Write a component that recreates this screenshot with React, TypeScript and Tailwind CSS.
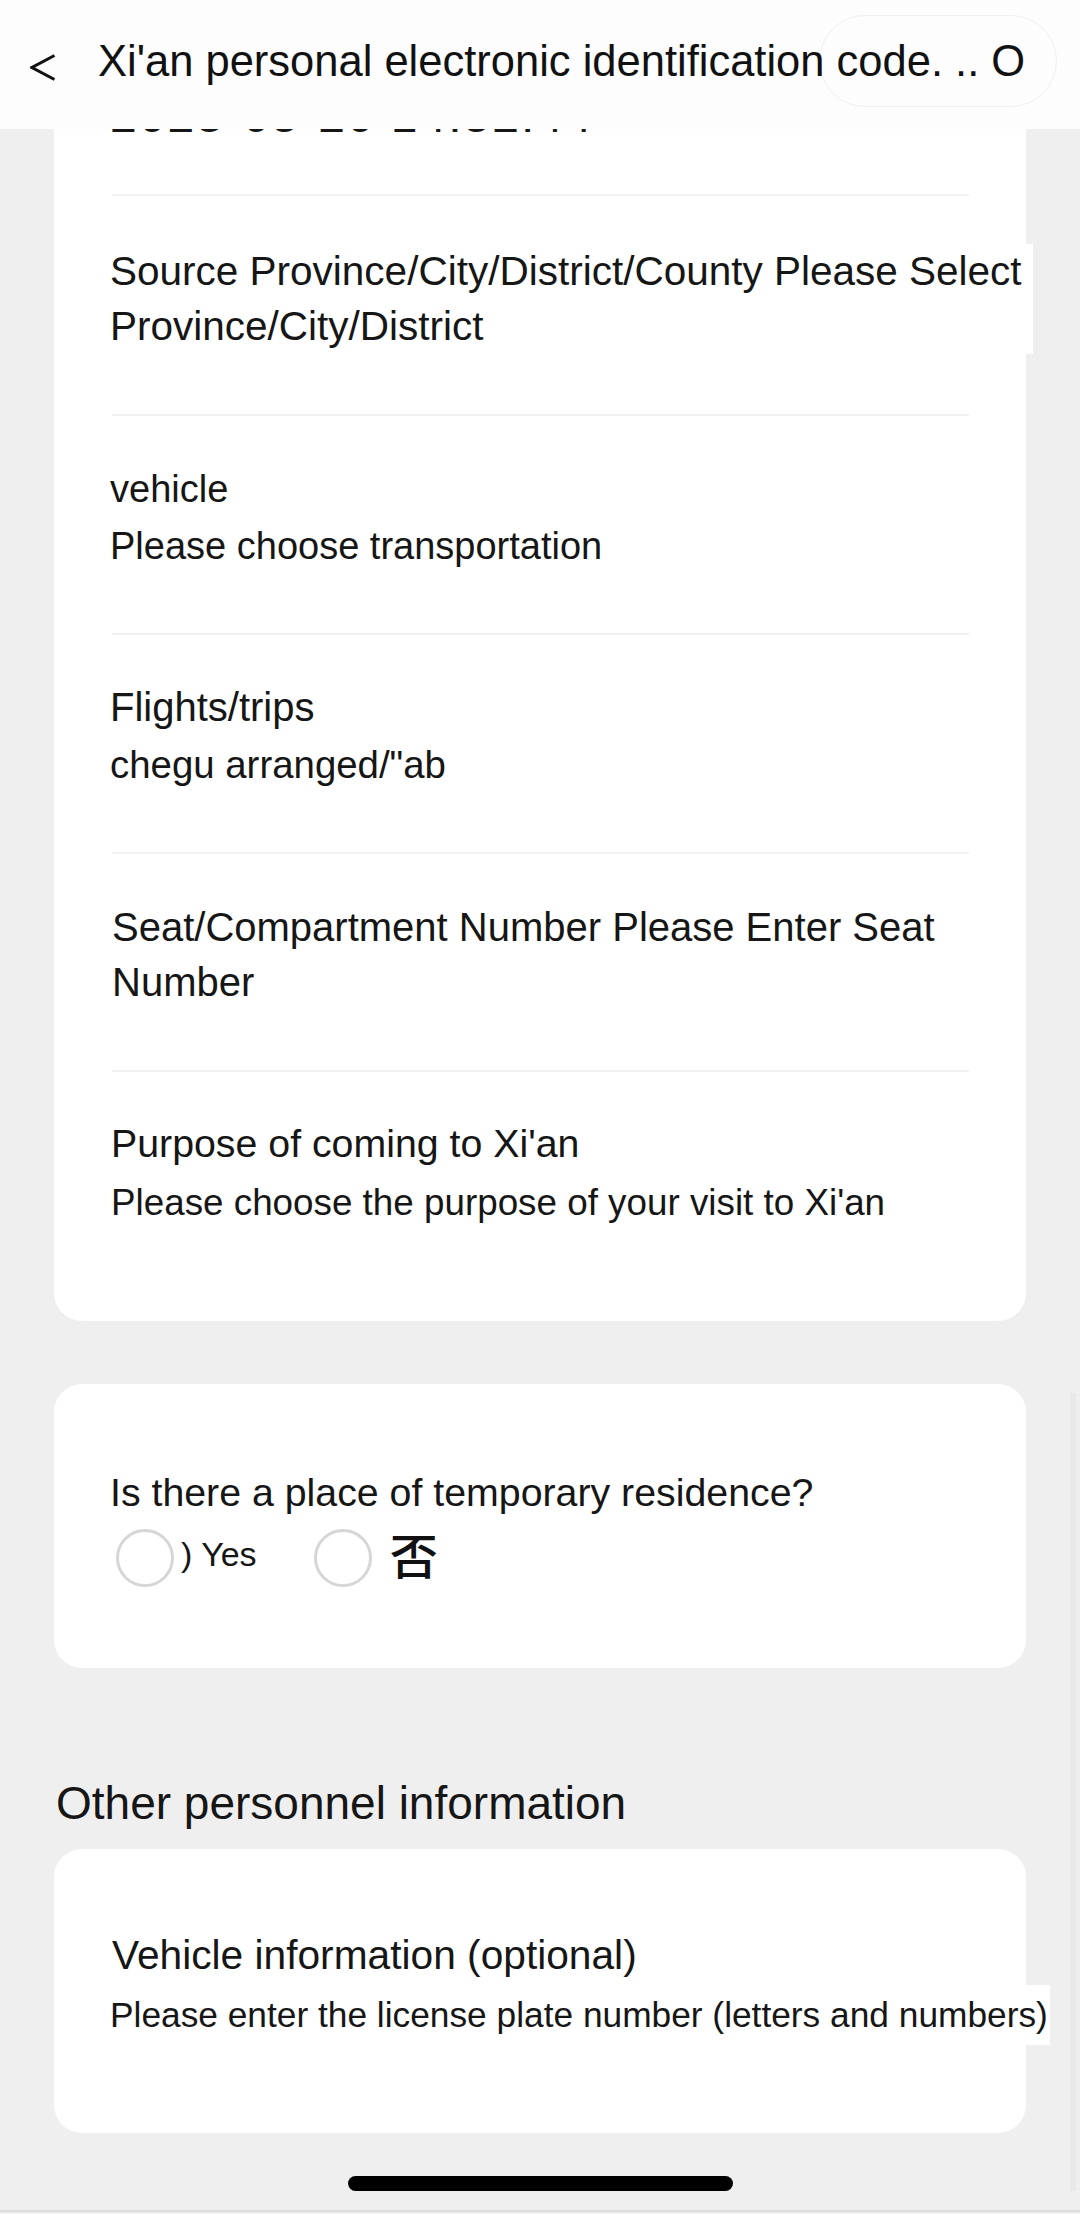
import React from "react";

function Divider() {
  return <div className="ml-[58px] mr-[57px] h-[2px] bg-[#f1f1f1]" />;
}

export default function App() {
  return (
    <div className="relative min-h-[2214px] w-[1080px] overflow-hidden bg-[#efefef] font-['Liberation_Sans','Noto_Sans_CJK_SC',sans-serif] text-[#161616]">
      {/* Top navigation bar (overlays scrolled content) */}
      <div className="absolute left-0 top-0 z-10 h-[129px] w-full bg-[#fdfdfd]">
        <div className="absolute left-[819px] top-[15px] h-[92px] w-[238px] rounded-full border border-[#efefef]" />
        <div className="relative flex items-start">
          <svg className="ml-[30px] mt-[54px]" width="26" height="27" viewBox="0 0 26 27">
            <polyline points="24.5,1.5 2,13.5 24.5,25.5" fill="none" stroke="#111" strokeWidth="3" strokeLinejoin="miter" />
          </svg>
          <span className="ml-[42px] mt-[31px] whitespace-nowrap text-[43.5px] leading-[60px] text-[#111]">
            Xi'an personal electronic identification code. .. O
          </span>
        </div>
      </div>

      {/* Scroll indicator */}
      <div className="absolute right-[4px] top-[1393px] h-[798px] w-[6px] bg-[#e9e9e9]" />
      <div className="absolute bottom-[2px] left-0 h-[2px] w-full bg-[#dedede]" />

      <div className="flex flex-col px-[54px] pt-[40px]">
        {/* Card 1 */}
        <div className="rounded-[28px] bg-white">
          <div className="pl-[56px] pt-[46px] pb-[48px]">
            <div className="h-[60px] whitespace-nowrap text-[48px] leading-[60px] tracking-[2px]">2023-05-20 14:52:44</div>
          </div>
          <Divider />
          <div className="pl-[56px] pt-[48px] pb-[60px]">
            <div className="w-[923px] whitespace-nowrap bg-white text-[40.5px] leading-[55px]">
              Source Province/City/District/County Please Select
              <br />
              Province/City/District
            </div>
          </div>
          <Divider />
          <div className="whitespace-nowrap pl-[56px] pt-[45px] pb-[58px] text-[38px] leading-[57px]">
            <div>vehicle</div>
            <div>Please choose transportation</div>
          </div>
          <Divider />
          <div className="whitespace-nowrap pl-[56px] pt-[44px] pb-[59px] leading-[57px]">
            <div className="text-[40px]">Flights/trips</div>
            <div className="text-[38.4px]">{'chegu arranged/"ab'}</div>
          </div>
          <Divider />
          <div className="whitespace-nowrap pl-[58px] pt-[46px] pb-[60px] text-[40px] leading-[55px]">
            <div>Seat/Compartment Number Please Enter Seat</div>
            <div>Number</div>
          </div>
          <Divider />
          <div className="whitespace-nowrap pl-[57px] pt-[41px] pb-[88px] leading-[60px]">
            <div className="text-[39.3px]">Purpose of coming to Xi'an</div>
            <div className="text-[36.8px]">Please choose the purpose of your visit to Xi'an</div>
          </div>
        </div>

        {/* Card 2 */}
        <div className="mt-[63px] rounded-[28px] bg-white pl-[56px] pt-[83px] pb-[81px]">
          <div className="whitespace-nowrap text-[39.3px] leading-[50px]">Is there a place of temporary residence?</div>
          <div className="mt-[12px] flex h-[58px] items-center">
            <span className="ml-[6px] block h-[58px] w-[58px] rounded-full border-[3px] border-[#d6d6d6]" />
            <span className="ml-[7px] mb-[8px] whitespace-nowrap text-[34px] leading-[40px]">) Yes</span>
            <span className="ml-[57px] block h-[58px] w-[58px] rounded-full border-[3px] border-[#d6d6d6]" />
            <span className="ml-[18px] mb-[10px] font-['Noto_Sans_CJK_SC',sans-serif] text-[48px] font-medium leading-[52px] text-[#111]">否</span>
          </div>
        </div>

        {/* Section title */}
        <div className="mt-[107px] whitespace-nowrap pl-[2px] text-[46px] leading-[56px]">Other personnel information</div>

        {/* Card 3 */}
        <div className="mt-[18px] rounded-[28px] bg-white pl-[58px] pt-[76px] pb-[88px] leading-[60px]">
          <div className="h-[60px] whitespace-nowrap text-[40.7px]">Vehicle information (optional)</div>
          <div className="-ml-[2px] block h-[60px] w-fit whitespace-nowrap bg-white pr-[2px] text-[35.3px]">
            Please enter the license plate number (letters and numbers)
          </div>
        </div>

        {/* Home indicator */}
        <div className="mx-auto mt-[43px] h-[15px] w-[385px] rounded-full bg-black" />
      </div>
    </div>
  );
}
